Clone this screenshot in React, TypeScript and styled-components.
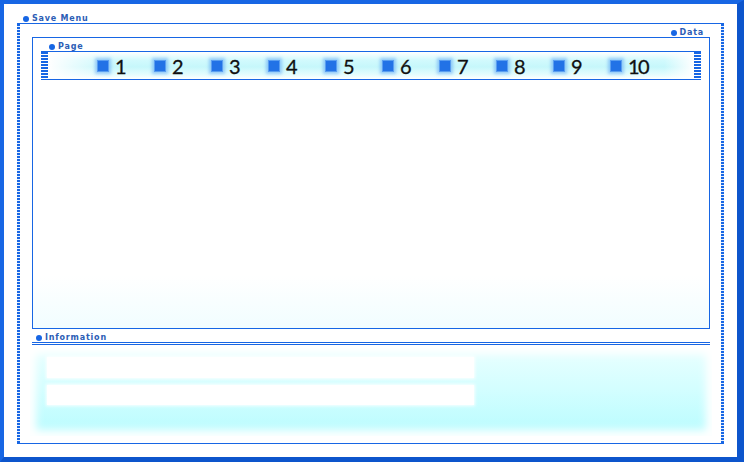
import React from 'react';
import styled, { createGlobalStyle } from 'styled-components';

const BLUE = '#1766e4';

const GlobalStyle = createGlobalStyle`
  html, body {
    margin: 0;
    padding: 0;
    background: #fff;
  }
  body {
    font-family: 'DejaVu Sans', 'Liberation Sans', sans-serif;
  }
`;

const Frame = styled.div`
  box-sizing: border-box;
  width: 744px;
  height: 462px;
  border-style: solid;
  border-color: ${BLUE};
  border-width: 4px 7px 5px 4px;
  border-right-color: #0d55cc;
  border-bottom-color: #0d55cc;
  background: #fff;
  padding: 0 13px 13px 13px;
  display: flex;
  flex-direction: column;
`;

const LabelRow = styled.div<{ $height: number; $indent: number; $right?: boolean }>`
  height: ${(p) => p.$height}px;
  display: flex;
  align-items: flex-end;
  justify-content: ${(p) => (p.$right ? 'flex-end' : 'flex-start')};
  padding: 0 ${(p) => (p.$right ? p.$indent : 0)}px 0 ${(p) => (p.$right ? 0 : p.$indent)}px;
  box-sizing: border-box;
  flex-shrink: 0;
`;

const Label = styled.span`
  display: inline-flex;
  align-items: center;
  gap: 3px;
  font-size: 8px;
  font-weight: bold;
  letter-spacing: 0.8px;
  color: #2c5db5;
  line-height: 9px;

  &::before {
    content: '';
    width: 6px;
    height: 6px;
    border-radius: 50%;
    background: ${BLUE};
  }
`;

const SaveBox = styled.div`
  flex: 1;
  display: grid;
  grid-template-columns: 3px 1fr 3px;
  border-top: 1px solid ${BLUE};
  border-bottom: 1px solid ${BLUE};
`;

const Rail = styled.div`
  background: repeating-linear-gradient(to bottom, ${BLUE} 0 2px, #e6f0ff 2px 3px);
`;

const SaveContent = styled.div`
  display: flex;
  flex-direction: column;
  padding: 0 11px 7px 12px;
`;

const DataBox = styled.div`
  box-sizing: border-box;
  height: 292px;
  border: 1px solid ${BLUE};
  padding: 0 8px;
  display: flex;
  flex-direction: column;
  background: linear-gradient(to bottom, #fff 0%, #fff 82%, #f1fdff 100%);
`;

const PageBar = styled.div`
  height: 29px;
  box-sizing: border-box;
  display: flex;
  border-top: 1px solid ${BLUE};
  border-bottom: 1px solid ${BLUE};
`;

const Ladder = styled.div`
  width: 7px;
  background: repeating-linear-gradient(to bottom, ${BLUE} 0 2px, #fff 2px 3px);
`;

const Track = styled.div`
  flex: 1;
  display: flex;
  align-items: center;
  padding-left: 49px;
  background:
    linear-gradient(to right, #fff 0px, rgba(255, 255, 255, 0) 60px, rgba(255, 255, 255, 0) calc(100% - 30px), #fff 100%),
    linear-gradient(to bottom, #fff 0%, #d2fafd 30%, #c6f7fb 55%, #e6fdfe 85%, #fff 100%);
`;

const PageItem = styled.div`
  width: 57px;
  flex-shrink: 0;
  display: flex;
  align-items: center;
  gap: 6px;
`;

const Square = styled.span`
  width: 10px;
  height: 10px;
  background: #2272e6;
  border: 1px solid #5a9ef0;
  box-shadow: 0 0 3px 2px rgba(80, 155, 245, 0.5);
  flex-shrink: 0;
`;

const Num = styled.span`
  font-family: 'Lato', 'Open Sans', sans-serif;
  font-size: 20px;
  line-height: 24px;
  color: #101010;
  letter-spacing: -1.6px;
  -webkit-text-stroke: 0.3px #101010;
`;

const DoubleRule = styled.div`
  height: 3px;
  box-sizing: border-box;
  border-top: 1px solid ${BLUE};
  border-bottom: 1px solid ${BLUE};
  flex-shrink: 0;
`;

const InfoPanel = styled.div`
  flex: 1;
  margin: 3px -2px 0 -2px;
  padding: 9px 17px;
  display: flex;
  flex-direction: column;
  gap: 7px;
  background: linear-gradient(to bottom, #e9ffff 0%, #d4feff 45%, #b8fcfe 100%);
  box-shadow: inset 0 0 8px 6px #fff;
`;

const Field = styled.div<{ $h: number }>`
  width: 427px;
  height: ${(p) => p.$h}px;
  background: #fff;
  box-shadow: 0 0 3px 1px rgba(255, 255, 255, 0.9);
`;

const pages = [1, 2, 3, 4, 5, 6, 7, 8, 9, 10];

export default function App() {
  return (
    <>
      <GlobalStyle />
      <Frame>
        <LabelRow $height={19} $indent={6}>
          <Label>Save Menu</Label>
        </LabelRow>
        <SaveBox>
          <Rail />
          <SaveContent>
            <LabelRow $height={13} $indent={6} $right>
              <Label>Data</Label>
            </LabelRow>
            <DataBox>
              <LabelRow $height={13} $indent={8}>
                <Label>Page</Label>
              </LabelRow>
              <PageBar>
                <Ladder />
                <Track>
                  {pages.map((n) => (
                    <PageItem key={n}>
                      <Square />
                      <Num>{n}</Num>
                    </PageItem>
                  ))}
                </Track>
                <Ladder />
              </PageBar>
            </DataBox>
            <LabelRow $height={13} $indent={4}>
              <Label>Information</Label>
            </LabelRow>
            <DoubleRule />
            <InfoPanel>
              <Field $h={21} />
              <Field $h={20} />
            </InfoPanel>
          </SaveContent>
          <Rail />
        </SaveBox>
      </Frame>
    </>
  );
}
